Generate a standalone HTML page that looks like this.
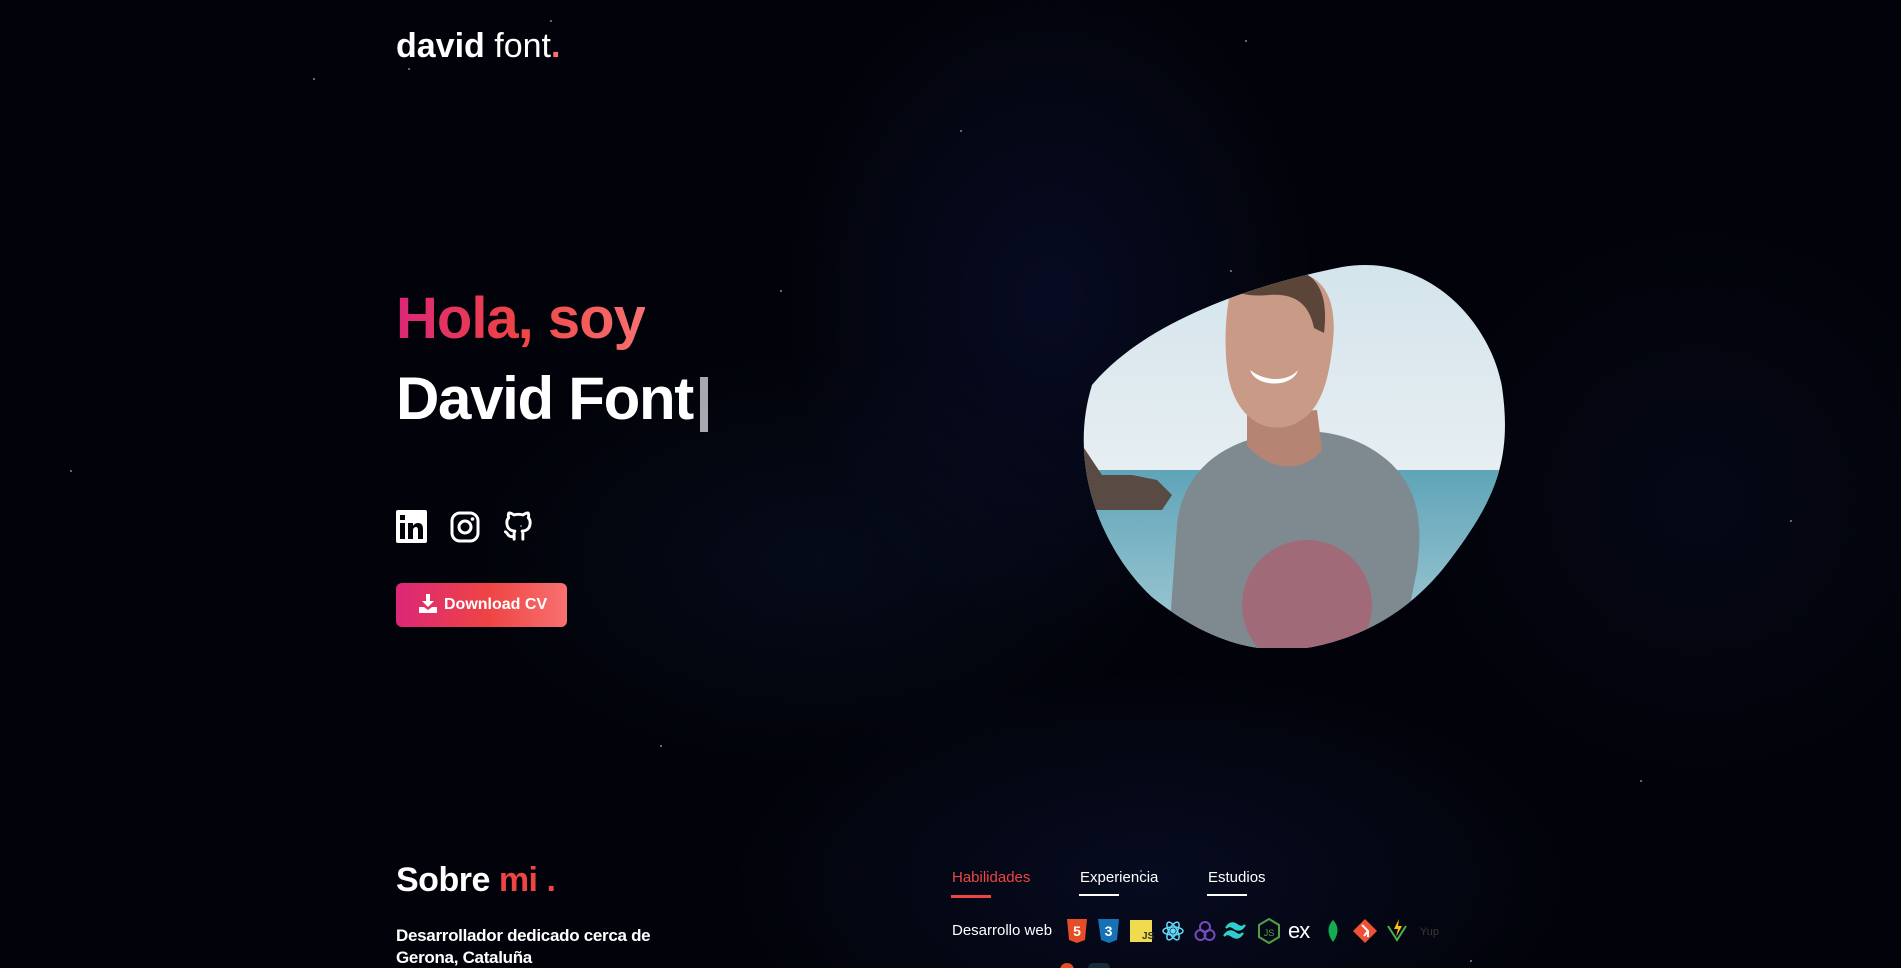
<!DOCTYPE html>
<html><head><meta charset="utf-8">
<style>
*{margin:0;padding:0;box-sizing:border-box}
html,body{width:1901px;height:968px;overflow:hidden}
body{font-family:"Liberation Sans",sans-serif;color:#fff;position:relative;
background:
radial-gradient(ellipse 380px 480px at 1050px 300px,rgba(12,18,55,.55),transparent 70%),
radial-gradient(ellipse 500px 300px at 820px 560px,rgba(10,20,42,.45),transparent 70%),
radial-gradient(ellipse 600px 300px at 1150px 880px,rgba(10,18,50,.55),transparent 70%),
radial-gradient(ellipse 400px 400px at 1700px 500px,rgba(8,12,35,.45),transparent 70%),
#02030a}
.a{position:absolute;white-space:nowrap}
.star{position:absolute;width:2px;height:2px;border-radius:50%;background:#6a8bb0}
</style></head><body>
<div class="star" style="left:313px;top:78px"></div>
<div class="star" style="left:408px;top:68px"></div>
<div class="star" style="left:550px;top:20px"></div>
<div class="star" style="left:780px;top:290px"></div>
<div class="star" style="left:520px;top:525px"></div>
<div class="star" style="left:1230px;top:270px"></div>
<div class="star" style="left:1790px;top:520px"></div>
<div class="star" style="left:1640px;top:780px"></div>
<div class="star" style="left:960px;top:130px"></div>
<div class="star" style="left:1245px;top:40px"></div>
<div class="star" style="left:660px;top:745px"></div>
<div class="star" style="left:1140px;top:870px"></div>
<div class="star" style="left:70px;top:470px"></div>
<div class="star" style="left:1470px;top:960px"></div>

<div class="a" style="left:396px;top:22px;font-size:34px;line-height:48px"><b>david</b> font<span style="color:#f87171;font-weight:bold">.</span></div>

<div class="a" style="left:396px;top:284px;font-size:58px;font-weight:bold;letter-spacing:-1px;line-height:70px;background:linear-gradient(90deg,#db2777,#ef4444 50%,#f87171);-webkit-background-clip:text;color:transparent">Hola, soy</div>
<div class="a" style="left:396px;top:364px;font-size:60px;font-weight:bold;letter-spacing:-1.3px;line-height:70px">David Font</div>
<div class="a" style="left:700px;top:377px;width:8px;height:55px;background:#a8a8b0"></div>

<svg class="a" style="left:396px;top:510px" width="31" height="33" viewBox="0 0 31 33"><rect width="31" height="33" rx="2" fill="#fff"/><rect x="4" y="5" width="5" height="5" fill="#02030a"/><rect x="4" y="13" width="5" height="16" fill="#02030a"/><path d="M12 13h5v3c1-2 3-3 5-3 4 0 5 3 5 6v10h-5v-9c0-2-1-3-2-3s-3 1-3 3v9h-5z" fill="#02030a"/></svg>
<svg class="a" style="left:450px;top:510px" width="30" height="33" viewBox="0 0 30 33"><rect x="2" y="3" width="26" height="28" rx="8" fill="none" stroke="#fff" stroke-width="3"/><circle cx="15" cy="17" r="6" fill="none" stroke="#fff" stroke-width="3"/><circle cx="22.5" cy="9" r="1.8" fill="#fff"/></svg>
<svg class="a" style="left:501px;top:508px" width="35" height="36" viewBox="0 0 24 24"><path d="M9 19c-4.3 1.4-4.3-2.5-6-3m12 5v-3.5c0-1 .1-1.4-.5-2 2.8-.3 5.5-1.4 5.5-6a4.6 4.6 0 0 0-1.3-3.2 4.2 4.2 0 0 0-.1-3.2s-1.1-.3-3.5 1.3a12.3 12.3 0 0 0-6.2 0C6.5 2.8 5.4 3.1 5.4 3.1a4.2 4.200 0 0 0-.1 3.2A4.6 4.6 0 0 0 4 9.5c0 4.6 2.7 5.7 5.5 6-.6.6-.6 1.2-.5 2V21" fill="none" stroke="#fff" stroke-width="2" stroke-linecap="round" stroke-linejoin="round"/></svg>

<div class="a" style="left:396px;top:583px;width:171px;height:44px;border-radius:6px;background:linear-gradient(90deg,#db2777,#ef4444 55%,#f87171);font-size:16px;font-weight:bold;line-height:44px;padding-left:48px">Download CV</div>
<svg class="a" style="left:419px;top:594px" width="18" height="19" viewBox="0 0 18 19"><path d="M7 0h4v7h4l-6 6-6-6h4z" fill="#fff"/><path d="M0 13h5l4 3 4-3h5v6H0z" fill="#fff"/></svg>

<svg class="a" style="left:1082px;top:265px" width="426" height="383" viewBox="0 0 426 383">
<defs><clipPath id="b"><path d="M10 120C60 60 160 22 260 2c90-15 150 60 160 120c10 70-5 110-50 170c-40 55-90 80-140 90c-60 10-110-10-160-50C20 285-15 200 10 120z"/></clipPath>
<linearGradient id="sky" x1="0" y1="0" x2="0" y2="1"><stop offset="0" stop-color="#d4e4ec"/><stop offset="1" stop-color="#f6f7f6"/></linearGradient>
<linearGradient id="sea" x1="0" y1="0" x2="0" y2="1"><stop offset="0" stop-color="#5fa4b8"/><stop offset="1" stop-color="#a4cbd5"/></linearGradient></defs>
<g clip-path="url(#b)">
<rect width="426" height="383" fill="url(#sky)"/>
<rect y="205" width="426" height="178" fill="url(#sea)"/>
<path d="M0 180l20 30 30 0 25 5 15 15-10 15H0z" fill="#5a4a44"/>
<path d="M85 400l10-140c5-50 40-80 90-90 50-10 90 0 120 25 35 30 35 70 30 110l-20 100z" fill="#7f8a90"/>
<circle cx="225" cy="340" r="65" fill="#a06a78"/>
<path d="M165 150l70-5 5 40c-20 25-55 20-75-5z" fill="#b68472"/>
<path d="M150 20c10-15 45-20 75-10 25 10 30 40 25 75-5 40-15 65-40 75-30 10-55-10-63-45-5-25-5-65 3-95z" fill="#c99a86"/>
<path d="M145 25c15-28 60-32 85-12 12 12 15 30 12 55l-10-5c-5-25-20-35-45-33-20 2-30-2-42-5z" fill="#5a4538"/>
<path d="M168 105c15 12 38 12 48 0-5 18-42 18-48 0z" fill="#fff"/>
</g></svg>

<div class="a" style="left:396px;top:858px;font-size:34px;font-weight:bold;line-height:44px;letter-spacing:-.5px">Sobre <span style="color:#ef4444">mi</span> <span style="color:#ef4444">.</span></div>
<div class="a" style="left:396px;top:925px;font-size:17px;font-weight:bold;line-height:22px;letter-spacing:-.3px">Desarrollador dedicado cerca de<br>Gerona, Cataluña</div>

<div class="a" style="left:952px;top:868px;font-size:15px;line-height:20px;color:#ef4444">Habilidades</div>
<div class="a" style="left:951px;top:895px;width:40px;height:3px;background:#ef4444"></div>
<div class="a" style="left:1080px;top:868px;font-size:15px;line-height:20px">Experiencia</div>
<div class="a" style="left:1079px;top:894px;width:40px;height:2px;background:#fff"></div>
<div class="a" style="left:1208px;top:868px;font-size:15px;line-height:20px">Estudios</div>
<div class="a" style="left:1207px;top:894px;width:40px;height:2px;background:#fff"></div>

<div class="a" style="left:952px;top:921px;font-size:15px;line-height:20px">Desarrollo web</div>
<svg class="a" style="left:1066px;top:918px" width="380" height="26" viewBox="0 0 380 26">
<path d="M1 1h20l-2 21-8 3-8-3z" fill="#e44d26"/><text x="11" y="18" font-size="14" font-weight="bold" fill="#fff" text-anchor="middle" font-family="Liberation Sans">5</text>
<path d="M32 1h21l-2 21-8 3-8-3z" fill="#1572b6"/><text x="42.5" y="18" font-size="14" font-weight="bold" fill="#fff" text-anchor="middle" font-family="Liberation Sans">3</text>
<rect x="64" y="2" width="22" height="22" fill="#f0db4f"/><text x="76" y="21" font-size="10" font-weight="bold" fill="#323330" font-family="Liberation Sans">JS</text>
<g transform="translate(107 13)" fill="none" stroke="#61dafb" stroke-width="1.5"><ellipse rx="10" ry="4"/><ellipse rx="10" ry="4" transform="rotate(60)"/><ellipse rx="10" ry="4" transform="rotate(120)"/><circle r="2" fill="#61dafb"/></g>
<g transform="translate(139 13)" fill="none" stroke="#764abc" stroke-width="2"><circle cy="-4" r="5"/><circle cx="-4.5" cy="4" r="5"/><circle cx="4.5" cy="4" r="5"/></g>
<path d="M160 10c3-5 7-6 11-3 3 2 5 3 8 0-3 5-7 6-11 3-3-2-5-3-8 0zm-2 8c3-5 7-6 11-3 3 2 5 3 8 0-3 5-7 6-11 3-3-2-5-3-8 0z" fill="#38bdf8" stroke="#2dd4bf" stroke-width="2"/>
<path d="M203 1l10 6v12l-10 6-10-6V7z" fill="none" stroke="#539e43" stroke-width="2"/><text x="203" y="18" font-size="9" fill="#539e43" text-anchor="middle" font-family="Liberation Sans">JS</text>
<text x="222" y="20" font-size="22" fill="#fff" font-family="Liberation Sans" letter-spacing="-1">ex</text>
<path d="M267 2c6 6 6 14 0 22-6-8-6-16 0-22z" fill="#13aa52"/>
<path d="M299 1l12 12-12 12-12-12z" fill="#f05033"/><path d="M296 7l6 6v6M302 13l-4 5" stroke="#fff" stroke-width="2" fill="none"/>
<path d="M322 8l9 14 9-14" fill="none" stroke="#4caf50" stroke-width="2"/><path d="M333 1l-5 10h4l-2 8 6-11h-4z" fill="#ffc107"/>
<text x="354" y="17" font-size="11" fill="#3a3a3a" font-family="Liberation Sans">Yup</text>
</svg>
<div class="a" style="left:1060px;top:963px;width:14px;height:8px;border-radius:7px 7px 0 0;background:#e44d26"></div>
<div class="a" style="left:1088px;top:963px;width:22px;height:8px;border-radius:5px 5px 0 0;background:#1a2a3a"></div>
</body></html>
